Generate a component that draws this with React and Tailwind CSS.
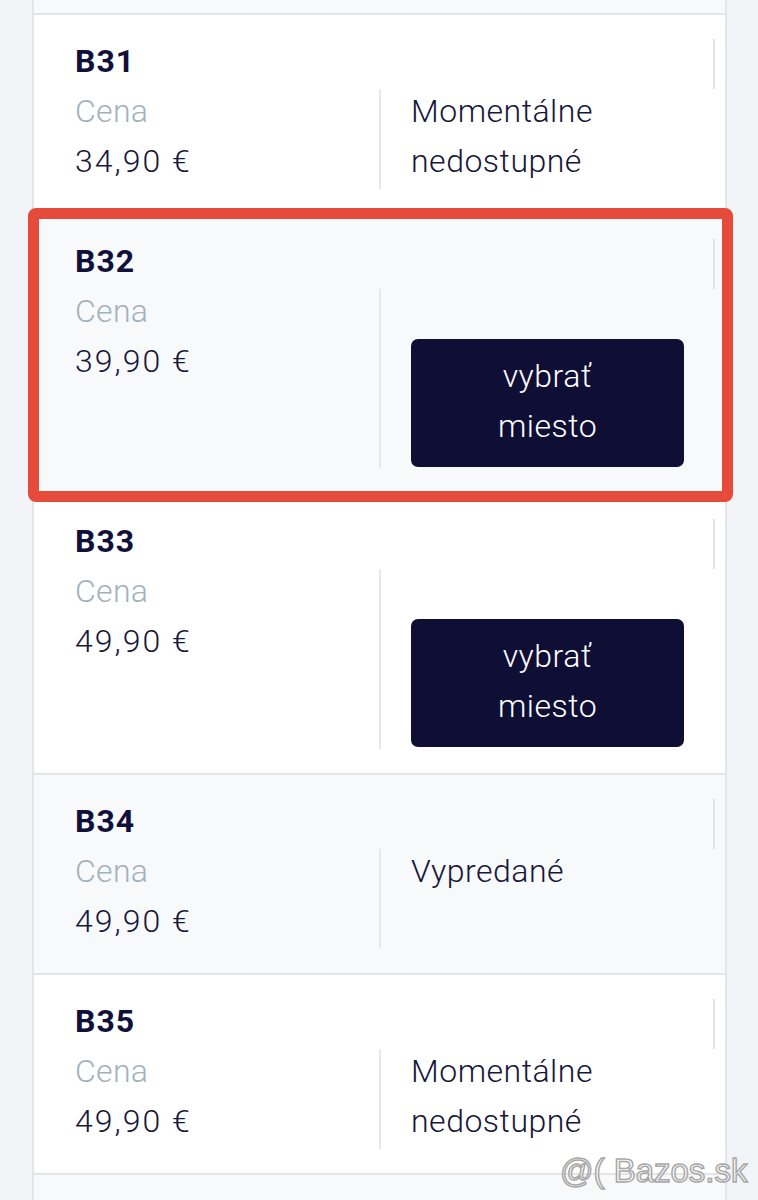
import React from "react";

const rows = [
  { id: "B31", price: "34,90 €", status: ["Momentálne", "nedostupné"], light: false },
  { id: "B32", price: "39,90 €", button: true, light: true, marked: true },
  { id: "B33", price: "49,90 €", button: true, light: false },
  { id: "B34", price: "49,90 €", status: ["Vypredané"], light: true },
  { id: "B35", price: "49,90 €", status: ["Momentálne", "nedostupné"], light: false },
];

function Row({ row }) {
  return (
    <div
      className={`relative border-t-2 border-[#e3e5ea] py-6 pl-[41px] pr-[10px] ${
        row.light ? "bg-[#f8f9fb]" : "bg-white"
      }`}
    >
      <div className="h-[50px] border-r-2 border-[#dfe2e7] text-[32px] font-bold leading-[44px] tracking-[1px] text-[#10103a]">
        {row.id}
      </div>
      <div className="flex">
        <div className="w-[304px] pb-[3px] text-[32px] font-light leading-[50px]">
          <div className="-mt-[3px] tracking-[0.3px] text-[#a3b1bc]">Cena</div>
          <div className="tracking-[2px] text-[#17173a]">{row.price}</div>
        </div>
        <div className="flex-1 border-l-2 border-[#e6e8ec] pl-[30px]">
          {row.button ? (
            <div className="pt-[50px] pb-[2px]">
              <button className="flex h-[128px] w-[273px] flex-col items-center justify-center rounded-[7px] bg-[#0f0f36] pb-[4px] text-[32px] font-light leading-[50px] tracking-[0.5px] text-white">
                <span>vybrať</span>
                <span>miesto</span>
              </button>
            </div>
          ) : (
            <div className="-mt-[3px] text-[32px] font-light leading-[50px] tracking-[0.5px] text-[#17173a]">
              {row.status.map((s) => (
                <div key={s}>{s}</div>
              ))}
            </div>
          )}
        </div>
      </div>
      {row.marked && (
        <div className="pointer-events-none absolute -top-[7px] -left-[6px] -right-[8px] -bottom-[9px] z-10 rounded-[8px] border-[11px] border-[#e64a3b]" />
      )}
    </div>
  );
}

export default function App() {
  return (
    <div className="relative h-[1200px] overflow-hidden bg-[#f3f4f8] font-['Roboto',sans-serif]">
      <div className="ml-[32px] w-[695px] border-x-2 border-[#e3e5ea]">
        <div className="h-[13px] bg-[#f8f9fb]" />
        {rows.map((r) => (
          <Row key={r.id} row={r} />
        ))}
        <div className="h-[40px] border-t-2 border-[#e3e5ea] bg-[#f8f9fb]" />
      </div>
      <div className="pointer-events-none absolute left-[560px] top-[1154px] z-20 font-['Liberation_Sans',Arial,sans-serif] text-[33px] leading-none whitespace-nowrap text-white/70 [-webkit-text-stroke:1.5px_#a8a8a8]">
        @( Bazos.sk
      </div>
    </div>
  );
}
